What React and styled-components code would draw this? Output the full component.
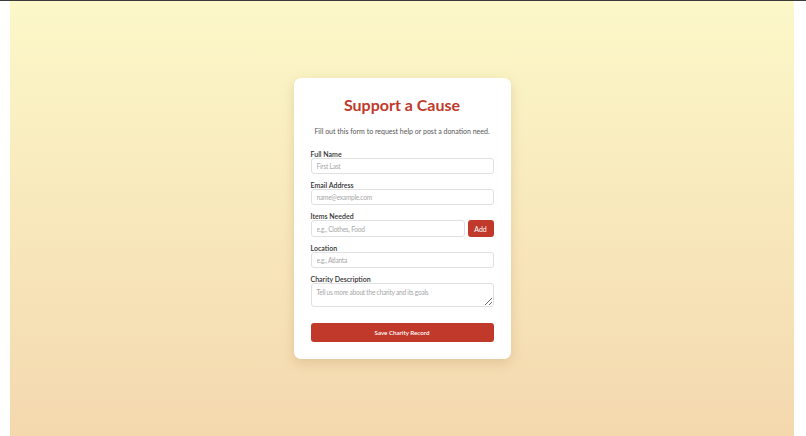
import React from "react";
import styled, { createGlobalStyle } from "styled-components";

const Global = createGlobalStyle`
  * { box-sizing: border-box; }
  html, body { margin: 0; padding: 0; background: #ffffff; }
  body {
    border-top: 1px solid #3a3a3a;
    font-family: Lato, "Noto Sans", sans-serif;
  }
`;

const Page = styled.div`
  margin-left: 10px;
  width: 784px;
  height: 435px;
  background: linear-gradient(180deg, #fcf8c9 0%, #f4d8ae 100%);
  display: flex;
  align-items: center;
  justify-content: center;
`;

const Card = styled.form`
  width: 217px;
  padding: 17px;
  background: #ffffff;
  border-radius: 7px;
  box-shadow: 0 4px 12px rgba(150, 110, 50, 0.22);
  display: flex;
  flex-direction: column;
`;

const Title = styled.h1`
  margin: 0;
  font-size: 16px;
  line-height: 20px;
  font-weight: 700;
  color: #c0392b;
  text-align: center;
`;

const Subtitle = styled.p`
  margin: 11px 0 14px;
  font-size: 7px;
  line-height: 10px;
  color: #555555;
  text-align: center;
  white-space: nowrap;
`;

const Field = styled.div`
  display: flex;
  flex-direction: column;
  margin-bottom: ${({ $last }) => ($last ? "16px" : "7px")};
`;

const Label = styled.label`
  font-size: 7px;
  line-height: 8px;
  font-weight: 600;
  color: #333333;
`;

const Input = styled.input`
  width: 100%;
  height: ${({ $tall }) => ($tall ? "17px" : "16px")};
  padding: 0 5px;
  border: 1px solid #e0e0e0;
  border-radius: 3px;
  font-family: inherit;
  font-size: 6.6px;
  letter-spacing: -0.25px;
  color: #333;
  outline: none;
  &::placeholder { color: #a8a8a8; }
`;

const Area = styled.textarea`
  width: 100%;
  height: 24px;
  padding: 4px 5px;
  border: 1px solid #e0e0e0;
  border-radius: 3px;
  font-family: inherit;
  font-size: 6.6px;
  letter-spacing: -0.25px;
  resize: vertical;
  outline: none;
  &::placeholder { color: #a8a8a8; }
`;

const Row = styled.div`
  display: flex;
  gap: 3px;
`;

const AddBtn = styled.button`
  flex: 0 0 26px;
  height: 17px;
  border: none;
  border-radius: 3px;
  background: #c0392b;
  color: #ffffff;
  font-family: inherit;
  font-size: 7px;
  padding: 0;
`;

const SaveBtn = styled.button`
  width: 100%;
  height: 19px;
  border: none;
  border-radius: 3px;
  background: #c0392b;
  color: #ffffff;
  font-family: inherit;
  font-size: 6.2px;
  font-weight: 600;
`;

export default function App() {
  return (
    <>
      <Global />
      <Page>
        <Card onSubmit={(e) => e.preventDefault()}>
          <Title>Support a Cause</Title>
          <Subtitle>Fill out this form to request help or post a donation need.</Subtitle>
          <Field>
            <Label>Full Name</Label>
            <Input placeholder="First Last" />
          </Field>
          <Field>
            <Label>Email Address</Label>
            <Input placeholder="name@example.com" />
          </Field>
          <Field>
            <Label>Items Needed</Label>
            <Row>
              <Input $tall placeholder="e.g., Clothes, Food" />
              <AddBtn type="button">Add</AddBtn>
            </Row>
          </Field>
          <Field>
            <Label>Location</Label>
            <Input placeholder="e.g., Atlanta" />
          </Field>
          <Field $last>
            <Label>Charity Description</Label>
            <Area placeholder="Tell us more about the charity and its goals" />
          </Field>
          <SaveBtn type="submit">Save Charity Record</SaveBtn>
        </Card>
      </Page>
    </>
  );
}
